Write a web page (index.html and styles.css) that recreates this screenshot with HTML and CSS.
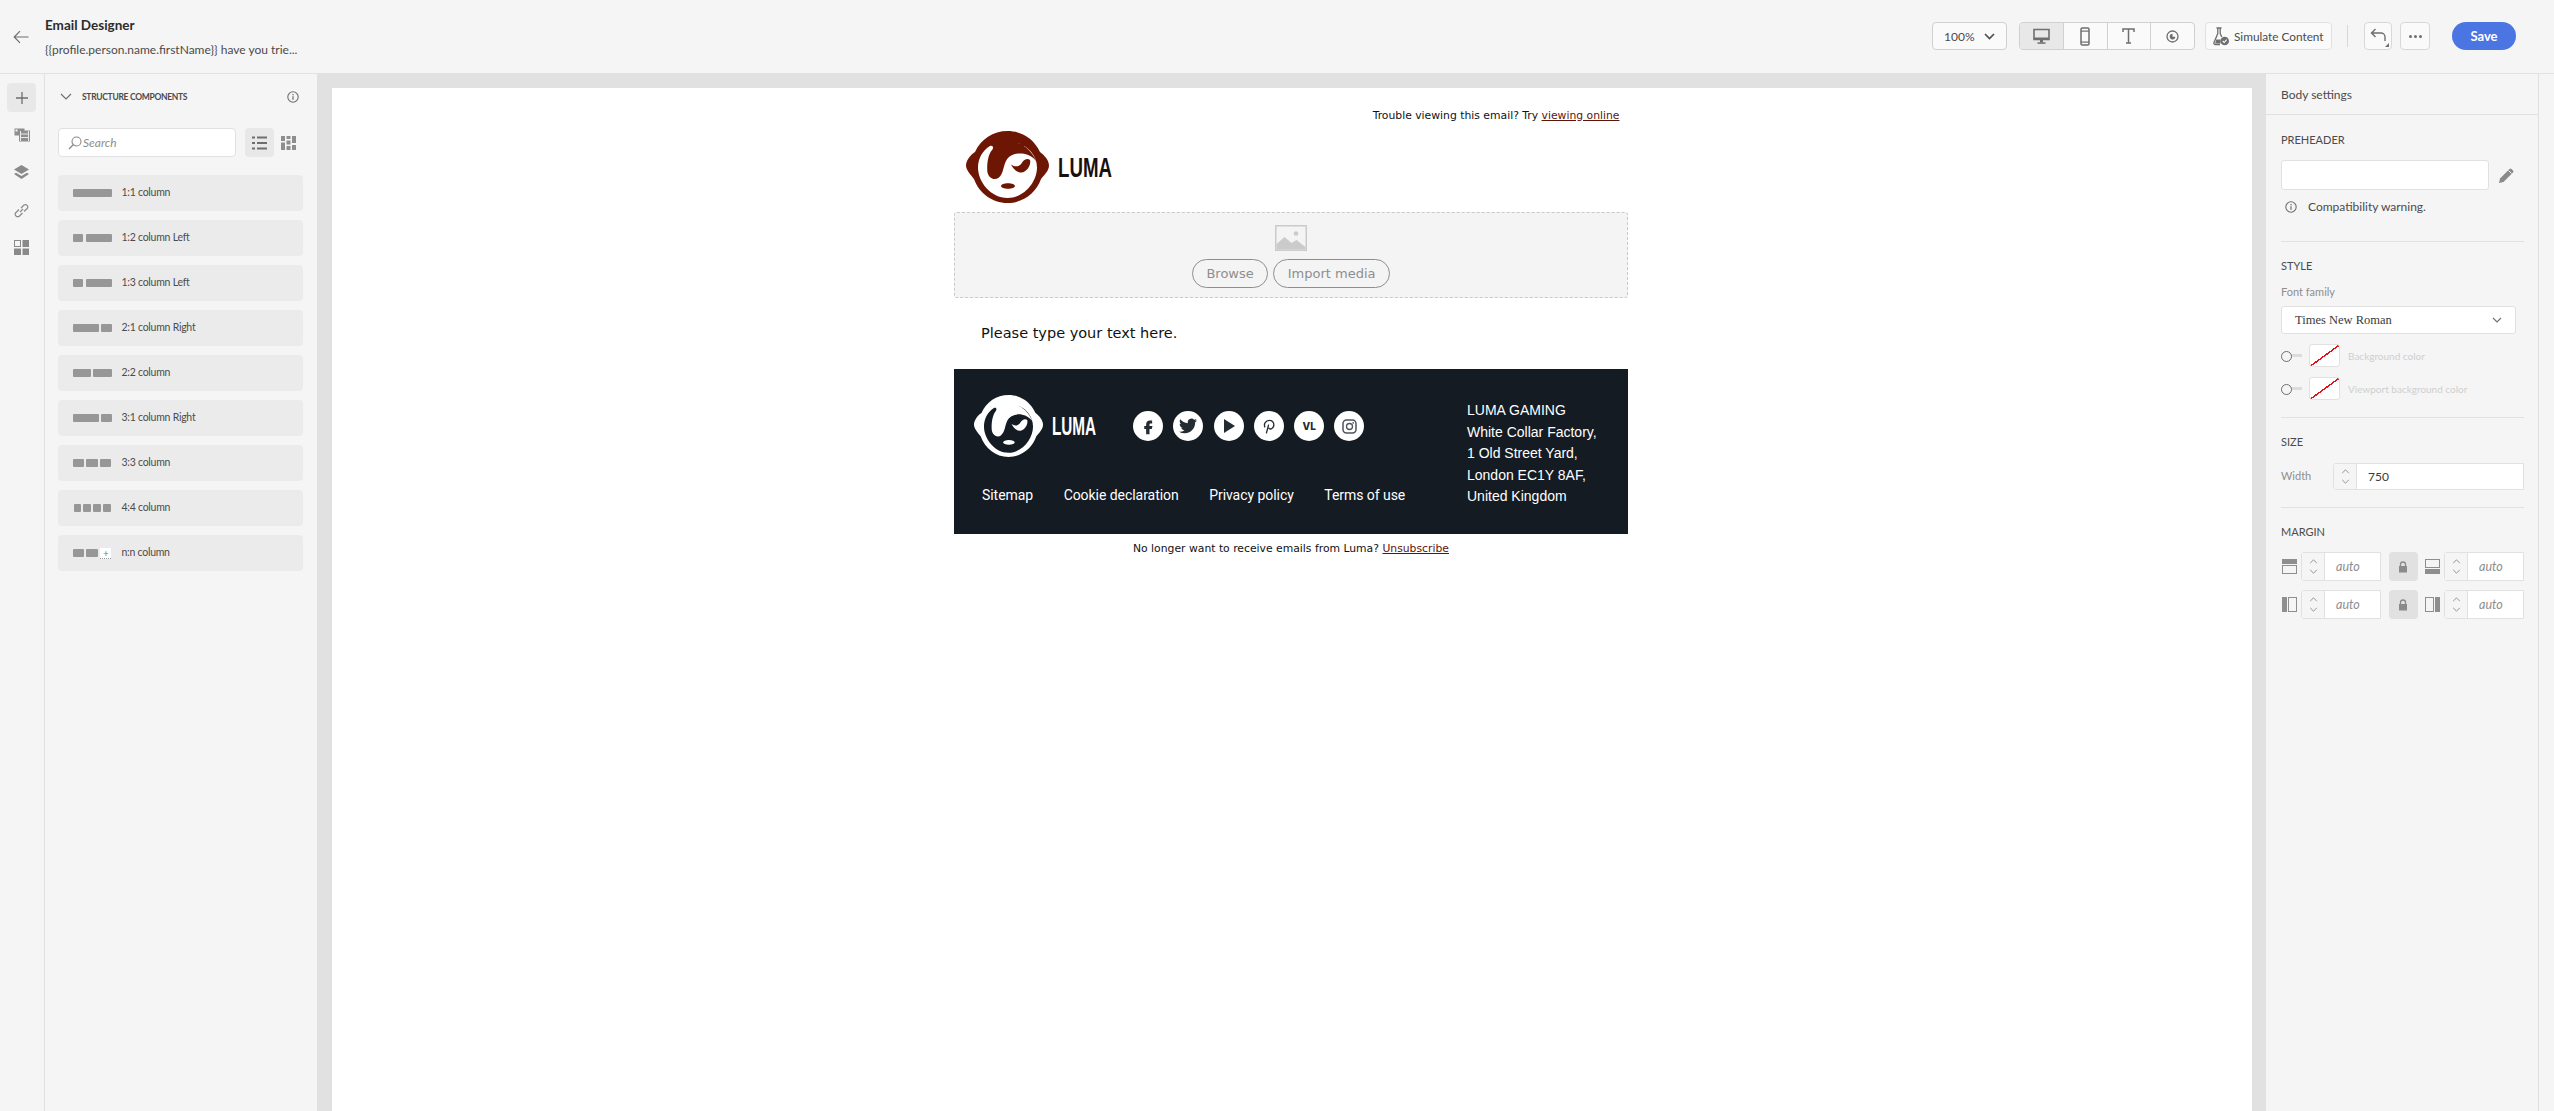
FILE: index.html
```html
<!DOCTYPE html>
<html lang="en">
<head>
<meta charset="utf-8">
<title>Email Designer</title>
<link rel="stylesheet" href="styles.css">
</head>
<body>
<svg class="defs" width="0" height="0" aria-hidden="true">
  <defs>
    <symbol id="up" viewBox="0 0 10 6"><path d="M1 5l4-4 4 4" fill="none" stroke="#8a8a8a" stroke-width="1.1"/></symbol>
    <symbol id="down" viewBox="0 0 10 6"><path d="M1 1l4 4 4-4" fill="none" stroke="#8a8a8a" stroke-width="1.1"/></symbol>
    <symbol id="info" viewBox="0 0 12 12"><circle cx="6" cy="6" r="5.2" fill="none" stroke="#6e6e6e" stroke-width="1.1"/><rect x="5.4" y="5.2" width="1.2" height="3.6" fill="#6e6e6e"/><rect x="5.4" y="3" width="1.2" height="1.3" fill="#6e6e6e"/></symbol>
    <symbol id="lock" viewBox="0 0 10 12"><path d="M2.5 5V3.5a2.5 2.5 0 015 0V5" fill="none" stroke="#8a8a8a" stroke-width="1.3"/><rect x="1" y="5" width="8" height="6.5" fill="#8a8a8a"/></symbol>
    <symbol id="luma-mark" viewBox="0 0 83 72" preserveAspectRatio="none">
      <path class="mark-fg" d="M41.500 0C56 0 68 8 74 21c4 3 9 8 9 13.500S78 44 75 48C70 62 57 72 41.500 72S13 62 8 48C5 44 0 39 0 34.500S4 24 9 21C15 8 27 0 41.500 0z"/>
      <path class="mark-bg" d="M41.500 10.500c16.500 0 29.500 11.500 29.500 26S58 67 41.500 67 12 51 12 36.500c0-9 4.500-17 12-21.500 1.500-.9 3.400.2 3 1.900-.3 1.300-1 2.100-1.800 3.100C22.400 24 20.800 32 21.300 40c.4 6.500 6.700 10 11 7 5-3.500 4.700-11 7.700-17 3-5.800 10-8.500 18-7.200 5 .8 9 3.400 12 7.200-5-12-15-19.500-28.500-19.500z"/>
      <path class="mark-fg" d="M45 33.500c4 3 8.500 2.300 10.800-1.500 2-3.200 5.600-5.200 8.200-3 1.300 4.500-2.400 11-8 12.500-4.500.5-8.500-3-11-8zM35 55c0-1.500 3-2.700 7-2.700s7 1.200 7 2.700-3 2.700-7 2.700-7-1.200-7-2.700z"/>
    </symbol>
  </defs>
</svg>
<div class="app">
  <header class="topbar">
    <svg class="back" width="16" height="14" viewBox="0 0 16 14"><path d="M15.500 7H1.500M7 1.200L1.200 7 7 12.800" fill="none" stroke="#6e6e6e" stroke-width="1.200"/></svg>
    <div class="titles">
      <div class="title">Email Designer</div>
      <div class="subtitle">{{profile.person.name.firstName}} have you trie...</div>
    </div>
    <div class="tools">
      <div class="zoom-box"><span>100%</span><svg width="11" height="7" viewBox="0 0 11 7"><path d="M1 1l4.500 4.500L10 1" fill="none" stroke="#4b4b4b" stroke-width="1.600"/></svg></div>
      <div class="segments">
        <div class="seg seg-on"><svg width="17" height="17" viewBox="0 0 17 17"><path d="M1 1.500h15v10H1z" fill="none" stroke="#6e6e6e" stroke-width="1.600"/><rect x="1" y="9.500" width="15" height="2.500" fill="#6e6e6e"/><rect x="7" y="12" width="3" height="2.500" fill="#6e6e6e"/><rect x="4.500" y="14.300" width="8" height="1.500" fill="#6e6e6e"/></svg></div>
        <div class="seg"><svg width="10" height="19" viewBox="0 0 10 19"><rect x="1" y="1" width="8" height="17" rx="1.300" fill="none" stroke="#6e6e6e" stroke-width="1.500"/><rect x="1" y="3.500" width="8" height="1.200" fill="#6e6e6e"/><rect x="1" y="14.500" width="8" height="1.200" fill="#6e6e6e"/></svg></div>
        <div class="seg"><svg width="13" height="16" viewBox="0 0 13 16"><path d="M1 4V1h11v3M6.500 1v14M4 15h5" fill="none" stroke="#6e6e6e" stroke-width="1.500"/></svg></div>
        <div class="seg"><svg width="15" height="13" viewBox="0 0 15 13"><circle cx="7.500" cy="6.500" r="5.500" fill="none" stroke="#6e6e6e" stroke-width="1.300"/><path d="M7.500 3.800v2.900h2.800a2.800 2.800 0 11-2.800-2.900z" fill="#6e6e6e"/></svg></div>
      </div>
      <div class="simulate">
        <svg width="16" height="19" viewBox="0 0 16 19"><path d="M3.500 1h5M4.800 1v5.500L1 15.500c-.4 1 .2 2 1.300 2H7" fill="none" stroke="#6e6e6e" stroke-width="1.300"/><path d="M7.200 1v5.500l1.600 3.600" fill="none" stroke="#6e6e6e" stroke-width="1.300"/><path d="M3.300 12.500h4.200v4H2z" fill="#6e6e6e"/><circle cx="11.700" cy="14" r="4.300" fill="#6e6e6e"/><path d="M9.700 14l1.500 1.500 2.500-2.800" fill="none" stroke="#fff" stroke-width="1.100"/></svg>
        <span>Simulate Content</span>
      </div>
      <div class="vsep"></div>
      <div class="icon-btn undo"><svg width="17" height="17" viewBox="0 0 17 17"><path d="M5.500 1L1.500 5l4 4M1.500 5H11a4 4 0 014 4v4" fill="none" stroke="#6e6e6e" stroke-width="1.400"/></svg><i class="corner"></i></div>
      <div class="icon-btn more"><i></i><i></i><i></i></div>
      <div class="save">Save</div>
    </div>
  </header>

  <main class="workspace">
    <nav class="rail">
      <div class="rail-btn rail-on"><svg width="14" height="14" viewBox="0 0 14 14"><path d="M7 1v12M1 7h12" stroke="#6e6e6e" stroke-width="1.300"/></svg></div>
      <div class="rail-btn"><svg width="16" height="14" viewBox="0 0 16 14"><rect x="0.500" y="0.500" width="10" height="7" fill="#8e8e8e"/><rect x="5" y="2.500" width="11" height="11" fill="#8e8e8e"/><path d="M6.500 3v10M14.500 3v10M7 6h7M7 9.500h7" stroke="#f5f5f5" stroke-width="0.900"/><rect x="1.500" y="1.500" width="2" height="2" fill="#f5f5f5"/></svg></div>
      <div class="rail-btn"><svg width="15" height="15" viewBox="0 0 15 15"><path d="M7.500 0L15 4.500 7.500 9 0 4.500z" fill="#8a8a8a"/><path d="M2 7.800L0 9l7.500 5L15 9l-2-1.200-5.500 3.300z" fill="#8a8a8a"/></svg></div>
      <div class="rail-btn"><svg width="15" height="15" viewBox="0 0 15 15"><path d="M6 9l3-3M5 6.500L2 9.500a2.400 2.400 0 003.500 3.500l3-3M7 5l3-3a2.400 2.400 0 013.200 3.500L10 8.500" fill="none" stroke="#8a8a8a" stroke-width="1.200"/></svg></div>
      <div class="rail-btn"><svg width="15" height="15" viewBox="0 0 15 15"><rect x="0.500" y="0.500" width="6" height="6" fill="none" stroke="#8a8a8a"/><rect x="8.500" y="0" width="6.500" height="7" fill="#8a8a8a"/><rect x="0" y="8.500" width="7" height="6.500" fill="#8a8a8a"/><rect x="8.500" y="8.500" width="6.500" height="6.500" fill="#8a8a8a"/></svg></div>
    </nav>

    <aside class="panel">
      <div class="panel-head">
        <svg width="12" height="7" viewBox="0 0 12 7"><path d="M1 1l5 5 5-5" fill="none" stroke="#6e6e6e" stroke-width="1.200"/></svg>
        <span class="panel-title">STRUCTURE COMPONENTS</span>
        <svg class="panel-info" width="12" height="12"><use href="#info"/></svg>
      </div>
      <div class="search-row">
        <div class="search">
          <svg width="14" height="14" viewBox="0 0 14 14"><circle cx="8.500" cy="5.500" r="4.500" fill="none" stroke="#8a8a8a" stroke-width="1.100"/><path d="M5.200 8.800L1 13" stroke="#8a8a8a" stroke-width="1.300"/></svg>
          <span>Search</span>
        </div>
        <div class="view-btn view-on"><svg width="15" height="14" viewBox="0 0 15 14"><path d="M0 1.500h3M5 1.500h10M0 7h3M5 7h10M0 12.500h3M5 12.500h10" stroke="#6e6e6e" stroke-width="2"/></svg></div>
        <div class="view-btn"><svg width="15" height="14" viewBox="0 0 15 14"><path d="M0 0h4v5H0zM5.500 0h4v3h-4zM11 0h4v7h-4zM0 6.500h4V14H0zM5.500 4.500h4v4h-4zM5.500 10h4v4h-4zM11 9h4v5h-4z" fill="#8e8e8e"/></svg></div>
      </div>
      <div class="rows">
        <div class="row"><div class="bars"><b class="w1"></b></div><span>1:1 column</span></div>
        <div class="row"><div class="bars"><b class="w2"></b><b class="w5"></b></div><span>1:2 column Left</span></div>
        <div class="row"><div class="bars"><b class="w2"></b><b class="w5"></b></div><span>1:3 column Left</span></div>
        <div class="row"><div class="bars"><b class="w5"></b><b class="w2"></b></div><span>2:1 column Right</span></div>
        <div class="row"><div class="bars"><b class="w1"></b><b class="w1"></b></div><span>2:2 column</span></div>
        <div class="row"><div class="bars"><b class="w5"></b><b class="w2"></b></div><span>3:1 column Right</span></div>
        <div class="row"><div class="bars"><b class="w1"></b><b class="w1"></b><b class="w1"></b></div><span>3:3 column</span></div>
        <div class="row"><div class="bars bars-four"><b class="w1"></b><b class="w1"></b><b class="w1"></b><b class="w1"></b></div><span>4:4 column</span></div>
        <div class="row"><div class="bars"><b class="w1"></b><b class="w1"></b><em class="w1">+</em></div><span>n:n column</span></div>
      </div>
    </aside>

    <section class="canvas">
      <div class="sheet">
        <div class="email">
          <p class="trouble">Trouble viewing this email? Try <a>viewing online</a></p>
          <div class="logo-line">
            <svg class="logo logo-red" width="83" height="72" viewBox="0 0 83 72"><use href="#luma-mark"/></svg>
            <span class="word">LUMA</span>
          </div>
          <div class="dropzone">
            <svg width="32" height="26" viewBox="0 0 32 26"><rect width="32" height="26" fill="#cbcbcb"/><rect x="1.500" y="1.500" width="29" height="23" fill="#f4f4f4"/><path d="M1.500 24.500V19l8-7 7 6 5-3 9 7v2.500z" fill="#cbcbcb"/><circle cx="21" cy="8.500" r="2.300" fill="#cbcbcb"/></svg>
            <div class="drop-btns"><span class="pill">Browse</span><span class="pill">Import media</span></div>
          </div>
          <p class="placeholder">Please type your text here.</p>
          <div class="footer">
            <div class="foot-left">
              <div class="foot-top">
                <svg class="logo logo-white" width="69" height="62" viewBox="0 0 83 72" preserveAspectRatio="none"><use href="#luma-mark"/></svg>
                <span class="word word-white">LUMA</span>
                <div class="socials">
                  <span class="soc"><svg width="18" height="18" viewBox="0 0 24 24"><path d="M14.500 8.500h3V4.500h-3c-2.800 0-5 2.200-5 5v2.500H7v4h2.500v7h4.500v-7h3l1-4h-4V9.500c0-.6.400-1 1-1z" fill="#232b33"/></svg></span>
                  <span class="soc"><svg width="18" height="18" viewBox="0 0 24 24"><path d="M23.953 4.570a10 10 0 01-2.825.775 4.958 4.958 0 002.163-2.723c-.951.555-2.005.959-3.127 1.184a4.920 4.920 0 00-8.384 4.482C7.690 8.095 4.067 6.130 1.640 3.162a4.822 4.822 0 00-.666 2.475c0 1.710.870 3.213 2.188 4.096a4.904 4.904 0 01-2.228-.616v.060a4.923 4.923 0 003.946 4.827 4.996 4.996 0 01-2.212.085 4.936 4.936 0 004.604 3.417 9.867 9.867 0 01-6.102 2.105c-.390 0-.779-.023-1.170-.067a13.995 13.995 0 007.557 2.209c9.053 0 13.998-7.496 13.998-13.985 0-.210 0-.420-.015-.630A9.935 9.935 0 0024 4.590z" fill="#232b33"/></svg></span>
                  <span class="soc"><svg width="12" height="14" viewBox="0 0 12 14"><path d="M1 0l11 7-11 7z" fill="#232b33"/></svg></span>
                  <span class="soc"><svg width="16" height="18" viewBox="0 0 24 24"><path d="M8 23l3.500-13M6 14c-2.500-5 1-10.500 6.500-10.500 5 0 7.500 4 6.500 8.500-1 4.500-6 6-7.500 2.500" fill="none" stroke="#232b33" stroke-width="2"/></svg></span>
                  <span class="soc soc-vl">VL</span>
                  <span class="soc"><svg width="15" height="15" viewBox="0 0 15 15"><rect x="1" y="1" width="13" height="13" rx="3.500" fill="none" stroke="#4d545b" stroke-width="1.500"/><circle cx="7.500" cy="7.500" r="3" fill="none" stroke="#4d545b" stroke-width="1.300"/><circle cx="11.200" cy="3.800" r="0.900" fill="#4d545b"/></svg></span>
                </div>
              </div>
              <div class="foot-links"><a>Sitemap</a><a>Cookie declaration</a><a>Privacy policy</a><a>Terms of use</a></div>
            </div>
            <address class="address">LUMA GAMING<br>White Collar Factory,<br>1 Old Street Yard,<br>London EC1Y 8AF,<br>United Kingdom</address>
          </div>
          <p class="unsub">No longer want to receive emails from Luma? <a>Unsubscribe</a></p>
        </div>
      </div>
    </section>

    <aside class="settings">
      <div class="set-head">Body settings</div>
      <div class="set-body">
        <section class="group group-pre">
          <h3>PREHEADER</h3>
          <div class="pre-line">
            <div class="pre-input"></div>
            <svg width="15" height="15" viewBox="0 0 15 15"><path d="M0 15l1-4.500L10.500 1a1.500 1.500 0 012 0L14 2.500a1.500 1.500 0 010 2L4.500 14z" fill="#8a8a8a"/><path d="M9.500 2.500l3 3" stroke="#f5f5f5"/></svg>
          </div>
          <div class="warn"><svg width="12" height="12"><use href="#info"/></svg><span>Compatibility warning.</span></div>
        </section>
        <section class="group group-style">
          <h3>STYLE</h3>
          <div class="field-label">Font family</div>
          <div class="select"><span>Times New Roman</span><svg width="10" height="6" viewBox="0 0 10 6"><path d="M1 1l4 4 4-4" fill="none" stroke="#6e6e6e" stroke-width="1.100"/></svg></div>
          <div class="color-line"><i class="toggle"></i><i class="swatch"></i><span>Background color</span></div>
          <div class="color-line"><i class="toggle"></i><i class="swatch"></i><span>Viewport background color</span></div>
        </section>
        <section class="group group-size">
          <h3>SIZE</h3>
          <div class="size-line">
            <span class="field-label">Width</span>
            <div class="num num-wide">
              <div class="step"><svg width="9" height="5"><use href="#up"/></svg><svg width="9" height="5"><use href="#down"/></svg></div>
              <span class="val">750</span>
            </div>
          </div>
        </section>
        <section class="group group-margin">
          <h3>MARGIN</h3>
          <div class="margin-grid">
            <svg width="15" height="15" viewBox="0 0 15 15"><rect width="15" height="5" fill="#8e8e8e"/><rect x="0.500" y="6.500" width="14" height="8" fill="none" stroke="#8e8e8e"/></svg>
            <div class="num"><div class="step"><svg width="9" height="5"><use href="#up"/></svg><svg width="9" height="5"><use href="#down"/></svg></div><span class="auto">auto</span></div>
            <div class="lock"><svg width="10" height="12"><use href="#lock"/></svg></div>
            <svg width="15" height="15" viewBox="0 0 15 15"><rect y="10" width="15" height="5" fill="#8e8e8e"/><rect x="0.500" y="0.500" width="14" height="8" fill="none" stroke="#8e8e8e"/></svg>
            <div class="num"><div class="step"><svg width="9" height="5"><use href="#up"/></svg><svg width="9" height="5"><use href="#down"/></svg></div><span class="auto">auto</span></div>

            <svg width="15" height="15" viewBox="0 0 15 15"><rect width="5" height="15" fill="#8e8e8e"/><rect x="6.500" y="0.500" width="8" height="14" fill="none" stroke="#8e8e8e"/></svg>
            <div class="num"><div class="step"><svg width="9" height="5"><use href="#up"/></svg><svg width="9" height="5"><use href="#down"/></svg></div><span class="auto">auto</span></div>
            <div class="lock"><svg width="10" height="12"><use href="#lock"/></svg></div>
            <svg width="15" height="15" viewBox="0 0 15 15"><rect x="10" width="5" height="15" fill="#8e8e8e"/><rect x="0.500" y="0.500" width="8" height="14" fill="none" stroke="#8e8e8e"/></svg>
            <div class="num"><div class="step"><svg width="9" height="5"><use href="#up"/></svg><svg width="9" height="5"><use href="#down"/></svg></div><span class="auto">auto</span></div>
          </div>
        </section>
      </div>
    </aside>
    <div class="stripe"></div>
  </main>
</div>
</body>
</html>
```

FILE: styles.css
```css
* { box-sizing: border-box; }
html, body { margin: 0; height: 100%; overflow: hidden; }
body { background: #f5f5f5; font-family: Lato, "Open Sans", sans-serif; color: #4b4b4b; }
.defs { position: absolute; }
.app { display: flex; flex-direction: column; height: 1111px; }

.topbar { height: 74px; flex: none; display: flex; align-items: center; border-bottom: 1px solid #e1e1e1; padding-left: 13px; padding-right: 38px; }
.back { margin-right: 16px; }
.titles { display: flex; flex-direction: column; gap: 5px; margin-top: 1px; }
.title { font-size: 13.500px; font-weight: 700; line-height: 19px; color: #2c2c2c; }
.subtitle { font-size: 12px; line-height: 19px; color: #4b4b4b; white-space: nowrap; }
.tools { margin-left: auto; display: flex; align-items: center; height: 28px; margin-top: -1px; }
.zoom-box { width: 75px; height: 28px; display: flex; align-items: center; justify-content: space-between; padding: 0 11px; border: 1px solid #d0d0d0; border-radius: 4px; background: #fafafa; font-size: 12px; margin-right: 12px; }
.segments { width: 176px; height: 28px; display: flex; border: 1px solid #d0d0d0; border-radius: 4px; background: #fafafa; overflow: hidden; margin-right: 10px; }
.seg { flex: 1; display: flex; align-items: center; justify-content: center; border-right: 1px solid #d0d0d0; }
.seg:last-child { border-right: 0; }
.seg-on { background: #e8e8e8; }
.simulate { width: 127px; height: 28px; display: flex; align-items: center; gap: 5px; padding-left: 7px; border: 1px solid #e1e1e1; border-radius: 4px; background: #fafafa; font-size: 11.800px; white-space: nowrap; margin-right: 15px; }
.vsep { width: 1px; height: 22px; background: #d8d8d8; margin-right: 16px; }
.icon-btn { height: 28px; display: flex; align-items: center; justify-content: center; border: 1px solid #d8d8d8; border-radius: 4px; background: #fafafa; position: relative; }
.undo { width: 28px; margin-right: 8px; }
.corner { position: absolute; right: 2px; bottom: 2px; width: 0; height: 0; border-left: 4px solid transparent; border-bottom: 4px solid #6e6e6e; }
.more { width: 30px; gap: 2px; margin-right: 22px; }
.more i { width: 3px; height: 3px; border-radius: 50%; background: #6e6e6e; }
.save { width: 64px; height: 28px; border-radius: 14px; background: #4b75e2; color: #fff; font-size: 13px; font-weight: 700; display: flex; align-items: center; justify-content: center; }

.workspace { flex: 1; display: flex; min-height: 0; }
.rail { width: 45px; flex: none; border-right: 1px solid #e1e1e1; padding: 9px 0 0 7px; display: flex; flex-direction: column; gap: 8.500px; }
.rail-btn { width: 29px; height: 29px; display: flex; align-items: center; justify-content: center; border-radius: 4px; }
.rail-on { background: #e8e8e8; }

.panel { width: 272px; flex: none; padding: 0 14px 0 13px; }
.panel-head { height: 45px; display: flex; align-items: center; padding-left: 2px; }
.panel-title { font-size: 8.500px; font-weight: 700; letter-spacing: -0.3px; color: #4b4b4b; margin-left: 10px; }
.panel-info { margin-left: auto; margin-right: 4px; }
.search-row { display: flex; align-items: center; margin-top: 9px; }
.search { width: 178px; height: 29px; background: #fff; border: 1px solid #e1e1e1; border-radius: 4px; display: flex; align-items: center; padding-left: 9px; font-size: 12px; font-style: italic; color: #8e8e8e; }
.search svg { margin-right: 1px; }
.view-btn { width: 29px; height: 29px; display: flex; align-items: center; justify-content: center; border-radius: 4px; margin-left: 9px; }
.view-btn + .view-btn { margin-left: 0; }
.view-on { background: #e8e8e8; }
.rows { margin-top: 18px; display: flex; flex-direction: column; gap: 9px; }
.row { height: 36px; background: #ebebeb; border-radius: 4px; display: flex; align-items: center; padding-left: 14.500px; font-size: 10.500px; letter-spacing: -0.25px; color: #4b4b4b; }
.row span { padding-bottom: 2px; }
.bars { width: 39px; height: 8.500px; display: flex; gap: 2.500px; margin-right: 10px; }
.bars-four { padding: 0 1px; }
.bars b { display: block; background: #979797; border-radius: 1px; }
.w1 { flex: 1 1 0; }
.w2 { flex: 0 0 10.500px; }
.w5 { flex: 1 1 0; }
.bars em { display: flex; align-items: center; justify-content: center; height: 11px; margin-top: -1px; background: #fff; border-bottom: 1px dotted #979797; font-style: normal; font-size: 10px; color: #7a7a7a; }

.canvas { width: 1949px; flex: none; background: #e1e1e1; padding: 14px 14px 0 15px; }
.sheet { background: #fff; height: 100%; padding-right: 2px; }
.email { width: 674px; margin: 0 auto; font-family: "DejaVu Sans", sans-serif; color: #111; }
.trouble { margin: 0; padding: 19px 8.500px 0 0; height: 42px; text-align: right; font-size: 10.800px; line-height: 18px; }
.email a { text-decoration: underline; color: #5e1408; }
.logo-line { height: 82px; padding: 1px 0 0 12px; display: flex; align-items: flex-start; }
.logo-red { color: #6e1604; --mark-bg: #fff; }
.logo-white { color: #fff; --mark-bg: #141b23; }
.mark-fg { fill: currentColor; }
.mark-bg { fill: var(--mark-bg); }
.word { display: block; flex: none; width: 81px; margin: 20px -27px 0 9px; font-family: "Liberation Sans", sans-serif; font-size: 28px; font-weight: 700; line-height: 34px; color: #1b0f0c; white-space: nowrap; transform: scaleX(0.667); transform-origin: left top; }
.dropzone { height: 86px; background: #f4f4f4; border: 1px dashed #c9c9c9; border-radius: 3px; display: flex; flex-direction: column; align-items: center; padding-top: 12px; gap: 8px; }
.drop-btns { display: flex; gap: 5px; }
.pill { height: 29px; display: flex; align-items: center; padding: 0 13.500px; border: 1px solid #8e8e8e; border-radius: 15px; font-size: 13px; color: #8e8e8e; }
.placeholder { margin: 0; height: 71px; padding: 25px 0 0 27px; font-size: 14.500px; line-height: 20px; }
.footer { height: 165px; background: #141b23; color: #fff; display: flex; justify-content: space-between; padding: 26px 0 0 20px; }
.foot-left { display: flex; flex-direction: column; }
.foot-top { display: flex; align-items: flex-start; height: 62px; }
.word-white { width: 72px; margin: 16px -27px 0 9px; font-size: 25px; line-height: 30px; color: #fff; transform: scaleX(0.611); }
.socials { display: flex; gap: 10.300px; margin: 16px 0 0 36px; }
.soc { width: 30px; height: 30px; border-radius: 50%; background: #fff; display: flex; align-items: center; justify-content: center; }
.soc-vl { font-family: Inter, sans-serif; font-size: 10px; font-weight: 800; color: #232b33; }
.foot-links { display: flex; gap: 30.500px; margin: 28px 0 0 8px; font-family: Roboto, sans-serif; font-size: 14px; line-height: 20px; letter-spacing: -0.05px; }
.foot-links a { color: #fff; text-decoration: none; white-space: nowrap; }
.address { font-style: normal; font-family: "Liberation Sans", sans-serif; font-size: 14px; line-height: 21.600px; margin: 5px 26px 0 0; width: 135px; }
.unsub { margin: 0; padding-top: 6px; text-align: center; font-size: 10.800px; line-height: 18px; }

.settings { width: 273px; flex: none; border-right: 1px solid #e1e1e1; background: #f5f5f5; }
.set-head { height: 41px; border-bottom: 1px solid #e1e1e1; padding-left: 15px; font-size: 12px; line-height: 42px; color: #4b4b4b; }
.set-body { padding: 0 14px 0 15px; }
.group { border-bottom: 1px solid #e1e1e1; }
.group:last-child { border-bottom: 0; }
.group h3 { margin: 0; font-size: 11px; font-weight: 400; line-height: 16px; color: #4b4b4b; }
.group-pre { height: 127px; padding-top: 17px; }
.pre-line { display: flex; align-items: center; gap: 10px; margin-top: 12px; }
.pre-input { width: 208px; height: 30px; background: #fff; border: 1px solid #e1e1e1; border-radius: 3px; }
.warn { display: flex; align-items: center; gap: 11px; padding-left: 4px; margin-top: 9px; font-size: 12px; line-height: 16px; }
.group-style { height: 176px; padding-top: 16px; }
.field-label { font-size: 11px; line-height: 16px; color: #8e8e8e; }
.group-style .field-label { margin-top: 10px; }
.select { width: 235px; height: 28px; margin-top: 6px; background: #fff; border: 1px solid #e1e1e1; border-radius: 3px; display: flex; align-items: center; justify-content: space-between; padding: 0 13px; font-family: "Liberation Serif", serif; font-size: 12.500px; color: #3a3a3a; }
.color-line { display: flex; align-items: center; height: 23px; margin-top: 10px; font-size: 10px; color: #cfcfcf; }
.toggle { width: 21px; height: 9px; position: relative; margin-right: 7px; flex: none; }
.toggle::before { content: ""; position: absolute; left: 6px; right: 0; top: 3px; height: 3px; background: #dcdcdc; }
.toggle::after { content: ""; position: absolute; left: 0; top: 0; width: 9px; height: 9px; border-radius: 50%; background: #f5f5f5; border: 1px solid #6e6e6e; }
.swatch { width: 31px; height: 23px; flex: none; border: 1px solid #e1e1e1; border-radius: 3px; margin-right: 8px; background: linear-gradient(to top left, #fff calc(50% - 1px), #e3101a calc(50% - 1px), #e3101a calc(50% + 0.5px), #fff calc(50% + 0.5px)); }
.group-size { height: 90px; padding-top: 16px; }
.size-line { display: flex; align-items: center; justify-content: space-between; margin-top: 12px; }
.size-line .num { margin-top: 1px; }
.num { height: 28px; display: flex; background: #fff; border: 1px solid #e1e1e1; border-radius: 3px 0 0 3px; }
.num-wide { width: 191px; height: 27px; }
.step { width: 23px; flex: none; background: #f5f5f5; border-right: 1px solid #e1e1e1; display: flex; flex-direction: column; align-items: center; justify-content: center; gap: 5px; }
.val { font-size: 12px; line-height: 26px; padding-left: 11px; color: #3a3a3a; }
.auto { font-size: 12.500px; font-style: italic; line-height: 27px; padding-left: 11px; color: #8e8e8e; }
.group-margin { padding-top: 16px; }
.margin-grid { display: grid; grid-template-columns: 15px 80px 36px 15px 80px; column-gap: 4px; row-gap: 9px; align-items: center; margin-top: 12px; margin-left: 1px; }
.margin-grid .num { height: 29px; }
.lock { width: 29px; height: 29px; background: #e1e1e1; border-radius: 4px; display: flex; align-items: center; justify-content: center; justify-self: center; }
.stripe { flex: 1; }
```
